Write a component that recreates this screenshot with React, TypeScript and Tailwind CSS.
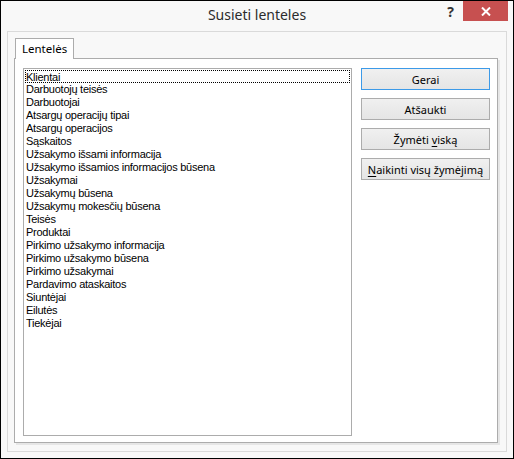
const tables = [
  "Klientai",
  "Darbuotojų teisės",
  "Darbuotojai",
  "Atsargų operacijų tipai",
  "Atsargų operacijos",
  "Sąskaitos",
  "Užsakymo išsami informacija",
  "Užsakymo išsamios informacijos būsena",
  "Užsakymai",
  "Užsakymų būsena",
  "Užsakymų mokesčių būsena",
  "Teisės",
  "Produktai",
  "Pirkimo užsakymo informacija",
  "Pirkimo užsakymo būsena",
  "Pirkimo užsakymai",
  "Pardavimo ataskaitos",
  "Siuntėjai",
  "Eilutės",
  "Tiekėjai",
];

function DialogButton({
  children,
  primary = false,
}: {
  children: React.ReactNode;
  primary?: boolean;
}) {
  return (
    <button
      className={
        "flex h-[22px] w-[129px] items-center justify-center border bg-gradient-to-b from-[#f0f0f0] to-[#e5e5e5] text-[11px] leading-none text-black " +
        (primary ? "border-[#3c9ae8]" : "border-[#acacac]")
      }
    >
      {children}
    </button>
  );
}

export default function App() {
  return (
    <div className="flex h-[459px] w-[514px] flex-col border border-black bg-[#f8f8f8] font-['Noto_Sans',sans-serif]">
      {/* title bar */}
      <div className="grid h-[30px] shrink-0 grid-cols-[1fr_auto_1fr]">
        <div />
        <div className="pt-[3px] text-[14px] leading-[22px] text-[#2b2b2b]">
          Susieti lenteles
        </div>
        <div className="flex items-start justify-end pr-[5px]">
          <span className="mr-[9px] mt-[3px] text-[14px] font-bold leading-[16px] text-[#333]">
            ?
          </span>
          <div className="flex h-[20px] w-[45px] items-center justify-center bg-[#c75050]">
            <svg width="10" height="9" viewBox="0 0 10 9">
              <path
                d="M1 0.5 L9 8.5 M9 0.5 L1 8.5"
                stroke="white"
                strokeWidth="2"
              />
            </svg>
          </div>
        </div>
      </div>

      {/* outer panel */}
      <div className="mx-[6px] mb-[6px] flex flex-1 flex-col border border-[#dadada] pb-[8px] pl-[6px] pr-[8px] pt-[6px]">
        <div className="flex">
          <div className="relative z-10 -mb-px ml-px flex h-[21px] items-center border border-b-0 border-[#acacac] bg-white px-[6px] text-[11.5px] text-black">
            Lentelės
          </div>
        </div>
        <div className="flex flex-1 border border-[#acacac] bg-white pb-[6px] pl-[8px] pr-[7px] pt-[9px] shadow-[2px_2px_0_#e6e6e6]">
          <div className="h-[368px] w-[330px] border border-[#acacac] bg-white p-px font-['Liberation_Sans',sans-serif] text-[11px] tracking-[-0.25px] text-black">
            {tables.map((name, i) => (
              <div
                key={name}
                className={
                  "h-[13px] pl-px leading-[13px] " +
                  (i === 0 ? "border border-dotted border-black !pl-0 leading-[11px]" : "")
                }
              >
                {name}
              </div>
            ))}
          </div>
          <div className="ml-[9px] flex flex-col gap-[8px]">
            <DialogButton primary>Gerai</DialogButton>
            <DialogButton>Atšaukti</DialogButton>
            <DialogButton>
              <span>
                Žymėti <span className="underline underline-offset-2">v</span>iską
              </span>
            </DialogButton>
            <DialogButton>
              <span>
                <span className="underline underline-offset-2">N</span>aikinti visų žymėjimą
              </span>
            </DialogButton>
          </div>
        </div>
      </div>
    </div>
  );
}
